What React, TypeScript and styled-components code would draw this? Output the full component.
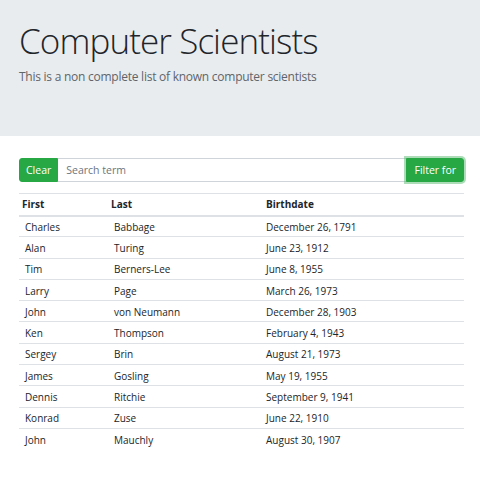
import React from "react";
import styled, { createGlobalStyle } from "styled-components";

const Global = createGlobalStyle`
  html, body { margin: 0; padding: 0; background: #fff; }
  body { font-family: "Open Sans", "Noto Sans", sans-serif; color: #212529; }
  * { box-sizing: border-box; }
`;

const Page = styled.div`
  width: 480px;
  min-height: 480px;
  background: #fff;
`;

const Jumbotron = styled.header`
  background: #e9ecef;
  height: 136px;
  padding: 17px 19px 0;
`;

const Title = styled.h1`
  margin: 0;
  font-size: 35px;
  font-weight: 300;
  line-height: 48px;
  letter-spacing: -0.9px;
  color: #212529;
`;

const Lead = styled.p`
  margin: 3px 0 0;
  font-size: 12px;
  font-weight: 400;
  color: #60656a;
  letter-spacing: -0.25px;
`;

const Container = styled.main`
  padding: 22px 16px 0 19px;
`;

const InputGroup = styled.div`
  display: flex;
  height: 24px;
`;

const Button = styled.button<{ $focused?: boolean }>`
  background: #28a745;
  color: #fff;
  border: 1px solid #28a745;
  font-family: inherit;
  font-size: 10.5px;
  padding: 0 ${(p) => (p.$focused ? 7 : 6)}px;
  height: 24px;
  border-radius: ${(p) => (p.$focused ? "0 3px 3px 0" : "3px 0 0 3px")};
  box-shadow: ${(p) => (p.$focused ? "0 0 0 2px rgba(72,180,97,0.45)" : "none")};
  cursor: pointer;
`;

const Input = styled.input`
  flex: 1;
  min-width: 0;
  height: 24px;
  border: 1px solid #ced4da;
  border-left: none;
  border-right: none;
  padding: 0 8px;
  font-family: inherit;
  font-size: 10.5px;
  color: #495057;
  &::placeholder { color: #6c757d; }
  outline: none;
`;

const Table = styled.table`
  width: 100%;
  margin-top: 11px;
  border-collapse: collapse;
  font-size: 10px;
`;

const Th = styled.th`
  text-align: left;
  font-weight: 700;
  padding: 0 3px;
  height: 22px;
  border-top: 1px solid #dee2e6;
  border-bottom: 2px solid #dee2e6;
`;

const Td = styled.td<{ $inset?: number }>`
  padding: 1px 3px 0 ${(p) => p.$inset ?? 6}px;
  height: 21.3px;
  border-top: 1px solid #dee2e6;
  color: #212529;
`;

const people = [
  ["Charles", "Babbage", "December 26, 1791"],
  ["Alan", "Turing", "June 23, 1912"],
  ["Tim", "Berners-Lee", "June 8, 1955"],
  ["Larry", "Page", "March 26, 1973"],
  ["John", "von Neumann", "December 28, 1903"],
  ["Ken", "Thompson", "February 4, 1943"],
  ["Sergey", "Brin", "August 21, 1973"],
  ["James", "Gosling", "May 19, 1955"],
  ["Dennis", "Ritchie", "September 9, 1941"],
  ["Konrad", "Zuse", "June 22, 1910"],
  ["John", "Mauchly", "August 30, 1907"],
];

export default function App() {
  return (
    <Page>
      <Global />
      <Jumbotron>
        <Title>Computer Scientists</Title>
        <Lead>This is a non complete list of known computer scientists</Lead>
      </Jumbotron>
      <Container>
        <InputGroup>
          <Button>Clear</Button>
          <Input placeholder="Search term" />
          <Button $focused>Filter for</Button>
        </InputGroup>
        <Table>
          <colgroup>
            <col style={{ width: "89px" }} />
            <col style={{ width: "155px" }} />
            <col />
          </colgroup>
          <thead>
            <tr>
              <Th>First</Th>
              <Th>Last</Th>
              <Th>Birthdate</Th>
            </tr>
          </thead>
          <tbody>
            {people.map(([f, l, b], i) => (
              <tr key={i}>
                <Td>{f}</Td>
                <Td>{l}</Td>
                <Td $inset={3}>{b}</Td>
              </tr>
            ))}
          </tbody>
        </Table>
      </Container>
    </Page>
  );
}
